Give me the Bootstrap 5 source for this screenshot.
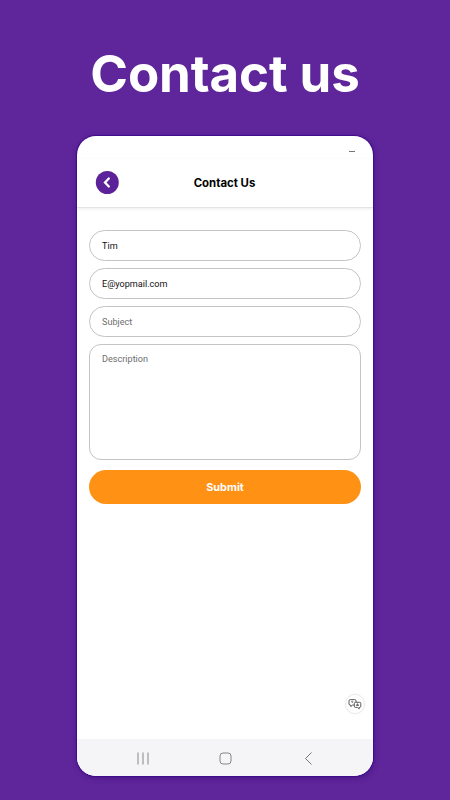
<!DOCTYPE html>
<html lang="en">
<head>
<meta charset="utf-8">
<meta name="viewport" content="width=device-width, initial-scale=1">
<title>Contact us</title>
<link href="https://cdn.jsdelivr.net/npm/bootstrap@5.3.0/dist/css/bootstrap.min.css" rel="stylesheet">
<style>
body { background: #5f259b; height: 800px; font-family: Roboto, sans-serif; }
.hero-title { font: 700 51px/62px Inter, sans-serif; letter-spacing: -.1px; padding-top: 43px; height: 136px; white-space: nowrap; }
.phone { width: 296px; height: 640px; margin-left: 77px; border-radius: 19px; box-shadow: 0 0 1px 1px #3e0c8c, 1px 2px 6px rgba(40, 0, 90, .4); }
.status-row { height: 23px; padding: 15px 18px 0 0; }
.status-dash { width: 6px; height: 1px; background: #777; }
.app-bar { height: 49px; padding: 0 19px 1px 18px; border-bottom: 1px solid #e4e4e4; box-shadow: 0 1px 3px rgba(0, 0, 0, .08); }
.back-btn { width: 24px; height: 24px; }
.app-title { font: 700 11.4px/16px Inter, sans-serif; color: #000; }
.contact-form { padding: 22px 12px 0; gap: 7px; }
.contact-form .form-control { height: 31px; border: 1px solid #c4c4c4; border-radius: 16px; padding: 0 12px; font-size: 9.1px; color: #111; box-shadow: none; }
.contact-form .form-control::placeholder { color: #6d6d6d; opacity: 1; }
.contact-form textarea.form-control { height: 116px; min-height: 0; border-radius: 12px; padding-top: 8px; resize: none; line-height: 12px; }
.submit-btn, .submit-btn:hover { height: 34px; margin-top: 3px; background: #ff9114; color: #fff; font: 700 10.9px/16px Inter, sans-serif; }
.chat-btn { width: 20px; height: 20px; margin-right: 8px; margin-bottom: 25px; border: 1px solid #ebebeb; box-shadow: 0 0 2px rgba(0, 0, 0, .08); }
.system-bar { height: 37px; background: #f5f5f8; padding: 0 54px; }
</style>
</head>
<body class="m-0 overflow-hidden">
<h1 class="hero-title text-white text-center mb-0">Contact us</h1>
<main class="phone bg-white overflow-hidden d-flex flex-column">
  <div class="status-row d-flex justify-content-end"><div class="status-dash"></div></div>
  <header class="app-bar d-flex align-items-center justify-content-between">
    <button class="back-btn btn p-0 border-0 d-flex" type="button" aria-label="Back">
      <svg width="24" height="24" viewBox="0 0 24 24" fill="none"><circle cx="12.300" cy="11.500" r="11.500" fill="#5c2299"/><path d="M13.800 7.500 10 11.500l3.800 4" stroke="#fff" stroke-width="2.300" stroke-linecap="round"/></svg>
    </button>
    <h2 class="app-title mb-0">Contact Us</h2>
    <span class="back-btn"></span>
  </header>
  <form class="contact-form d-flex flex-column">
    <input class="form-control" type="text" value="Tim" aria-label="Name">
    <input class="form-control" type="text" value="E@yopmail.com" aria-label="Email">
    <input class="form-control" type="text" placeholder="Subject" aria-label="Subject">
    <textarea class="form-control" placeholder="Description" aria-label="Description"></textarea>
    <button class="submit-btn btn border-0 rounded-pill w-100 p-0" type="button">Submit</button>
  </form>
  <button class="chat-btn btn rounded-circle p-0 mt-auto align-self-end d-flex align-items-center justify-content-center" type="button" aria-label="Chat">
    <svg width="14" height="12" viewBox="0 0 14 12" fill="none" stroke="#333" stroke-width=".8" stroke-linejoin="round"><path d="M2.200 1.600h4.600q1.200 0 1.200 1.200v3.100q0 1.200-1.200 1.200H4.400L2.800 8.600V7.100h-.6Q1 7.100 1 5.900V2.800q0-1.200 1.200-1.200Z"/><path d="M7.500 4.300h4.100q1.200 0 1.200 1.200v2.700q0 1.200-1.200 1.200h-.4v1.500L9.600 9.400H7.500q-1.200 0-1.200-1.200V5.500q0-1.200 1.200-1.200Z" fill="#fff"/><path d="M3.300 3.500q1.200-.9 1.500.1c.1.700-.8.700-.8 1.300M9.500 5.700l-1 2.200M9.500 5.700l1 2.200M8.900 7.200h1.300"/></svg>
  </button>
  <nav class="system-bar d-flex align-items-center justify-content-between flex-shrink-0" aria-label="System navigation">
    <svg width="24" height="16" viewBox="0 0 24 16" stroke="#999" stroke-width="1.200"><path d="M7 2.500v12M12 2.500v12M17 2.500v12"/></svg>
    <svg width="16" height="16" viewBox="0 0 16 16" fill="none" stroke="#858585"><rect x="3" y="3" width="11" height="11" rx="3"/></svg>
    <svg width="24" height="16" viewBox="0 0 24 16" fill="none" stroke="#777" stroke-width="1"><path d="M16.500 2.500 10.500 8.500l6 6"/></svg>
  </nav>
</main>
<script src="https://cdn.jsdelivr.net/npm/bootstrap@5.3.0/dist/js/bootstrap.bundle.min.js"></script>
</body>
</html>
